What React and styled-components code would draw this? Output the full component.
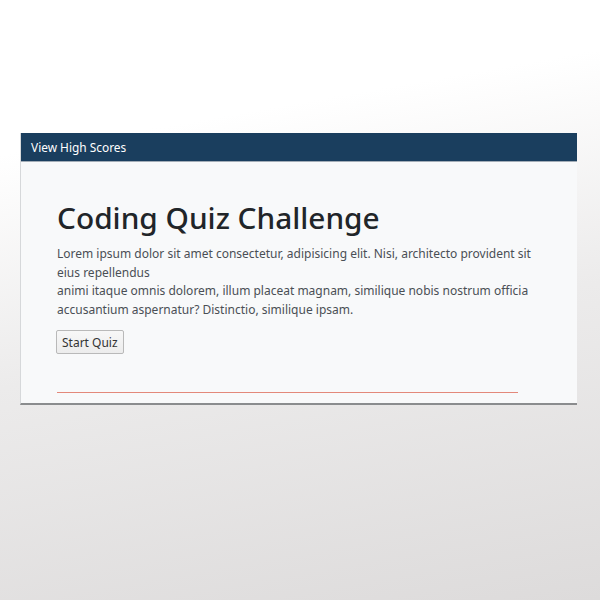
import React from 'react';
import styled, { createGlobalStyle } from 'styled-components';

const GlobalStyle = createGlobalStyle`
    html, body {
        margin: 0;
        min-height: 100%;
    }
    body {
        min-height: 600px;
        font-family: "Noto Sans", "Open Sans", sans-serif;
        background: linear-gradient(170deg, #ffffff 0%, #ffffff 22%, #ecebeb 55%, #dddbdb 100%);
    }
`;

const Page = styled.div`
    padding: 133px 23px 0 20px;
`;

const Card = styled.section`
    border-left: 1px solid #d6d8da;
    border-bottom: 2px solid #8a8c8e;
    background-color: #f8f9fa;
`;

const Header = styled.header`
    height: 28px;
    display: flex;
    align-items: center;
    padding: 0 10px;
    background-color: #1a3e5e;
    border-bottom: 1px solid #a3adb7;
`;

const HeaderLink = styled.a`
    color: #ffffff;
    font-size: 11.9px;
    text-decoration: none;
    cursor: pointer;
`;

const Body = styled.div`
    padding: 37px 40px 10px 36px;
`;

const Title = styled.h1`
    margin: 0 0 8px 0;
    font-size: 29.8px;
    font-weight: 500;
    line-height: 38px;
    color: #212529;
`;

const Text = styled.p`
    margin: 0 0 11px 0;
    max-width: 476px;
    font-size: 12px;
    line-height: 18.5px;
    color: #4a4f55;
`;

const Button = styled.button`
    display: block;
    font-family: inherit;
    font-size: 12px;
    color: #333;
    margin-left: -1px;
    padding: 1px 5px;
    height: 24px;
    border: 1px solid #b9b9b9;
    border-radius: 2px;
    background: linear-gradient(#f7f7f7, #ececec);
    cursor: pointer;
`;

const Rule = styled.hr`
    width: 461px;
    height: 0;
    margin: 38px 0 0 0;
    border: 0;
    border-top: 1px solid #e3887a;
`;

const App = () => {
    return (
        <>
            <GlobalStyle />
            <Page>
                <Card>
                    <Header>
                        <HeaderLink>View High Scores</HeaderLink>
                    </Header>
                    <Body>
                        <Title>Coding Quiz Challenge</Title>
                        <Text>
                            Lorem ipsum dolor sit amet consectetur, adipisicing elit. Nisi, architecto provident sit eius repellendus
                            <br />
                            animi itaque omnis dolorem, illum placeat magnam, similique nobis nostrum officia accusantium aspernatur? Distinctio, similique ipsam.
                        </Text>
                        <Button>Start Quiz</Button>
                        <Rule />
                    </Body>
                </Card>
            </Page>
        </>
    );
};

export default App;
